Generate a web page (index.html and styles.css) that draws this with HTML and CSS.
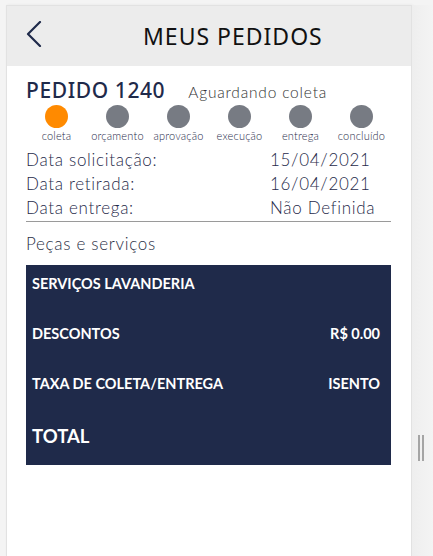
FILE: index.html
```html
<!DOCTYPE html>
<html lang="pt-BR">
<head>
<meta charset="utf-8">
<title>Meus Pedidos</title>
<link rel="stylesheet" href="styles.css">
</head>
<body>
<div class="page">
  <div class="panel">
    <header class="topbar">
      <button class="back" aria-label="Voltar">
        <svg width="16" height="26" viewBox="0 0 16 26"><path d="M14 1 L2 13 L14 25" fill="none" stroke="#1f2a4a" stroke-width="2.2" stroke-linecap="round" stroke-linejoin="round"/></svg>
      </button>
      <h1 class="title">MEUS PEDIDOS</h1>
    </header>
    <main class="content">
      <div class="order-head">
        <span class="order-id">PEDIDO 1240</span>
        <span class="order-status">Aguardando coleta</span>
      </div>
      <ol class="steps">
        <li class="step active"><span class="dot"></span><span class="label">coleta</span></li>
        <li class="step"><span class="dot"></span><span class="label">orçamento</span></li>
        <li class="step"><span class="dot"></span><span class="label">aprovação</span></li>
        <li class="step"><span class="dot"></span><span class="label">execução</span></li>
        <li class="step"><span class="dot"></span><span class="label">entrega</span></li>
        <li class="step"><span class="dot"></span><span class="label">concluído</span></li>
      </ol>
      <dl class="dates">
        <dt>Data solicitação:</dt><dd>15/04/2021</dd>
        <dt>Data retirada:</dt><dd>16/04/2021</dd>
        <dt>Data entrega:</dt><dd>Não Definida</dd>
      </dl>
      <h2 class="section">Peças e serviços</h2>
      <div class="summary">
        <div class="row"><span>SERVIÇOS LAVANDERIA</span></div>
        <div class="row"><span>DESCONTOS</span><span>R$ 0.00</span></div>
        <div class="row"><span>TAXA DE COLETA/ENTREGA</span><span>ISENTO</span></div>
        <div class="row total"><span>TOTAL</span></div>
      </div>
    </main>
  </div>
  <div class="side">
    <span class="grip"></span>
  </div>
</div>
</body>
</html>
```
FILE: styles.css
```css
html, body {
  margin: 0;
  padding: 0;
  height: 100%;
}
body {
  background: #f4f4f4;
  font-family: "Lato", "Open Sans", sans-serif;
  color: #1f2a4a;
  overflow: hidden;
}
.page {
  display: flex;
  height: 556px;
  padding: 5px 0 0 6px;
  box-sizing: border-box;
}
.panel {
  width: 406px;
  flex: none;
  background: #fff;
  border: 1px solid #e2e2e2;
  border-bottom: none;
  box-sizing: border-box;
  box-shadow: 1px 0 3px rgba(0,0,0,0.06);
}
.topbar {
  height: 60px;
  background: #ececec;
  display: flex;
  align-items: center;
  padding-left: 19px;
}
.back {
  border: 0;
  background: none;
  padding: 0;
  width: 16px;
  height: 26px;
  display: flex;
  margin-top: -4px;
}
.title {
  margin: 0 0 0 101px;
  font-family: "Noto Sans", sans-serif;
  font-weight: 400;
  font-size: 23px;
  letter-spacing: 1px;
  color: #111;
}
.content {
  padding: 10px 20px 0 19px;
}
.order-head {
  display: flex;
  align-items: baseline;
  height: 26px;
}
.order-id {
  font-family: "Noto Sans", sans-serif;
  font-size: 21px;
  font-weight: 500;
  color: #1f2a4a;
  letter-spacing: 0.6px;
}
.order-status {
  margin-left: 23px;
  font-family: "Lato", sans-serif;
  font-weight: 300;
  font-size: 15.5px;
  color: #333;
  letter-spacing: 0.8px;
}
.steps {
  list-style: none;
  margin: 3px 0 0;
  padding: 0;
  display: grid;
  grid-template-columns: repeat(6, 61px);
}
.step {
  display: flex;
  flex-direction: column;
  align-items: center;
}
.dot {
  width: 23px;
  height: 23px;
  border-radius: 50%;
  background: #777b83;
}
.step.active .dot {
  background: #ff8a00;
}
.label {
  margin-top: 1px;
  font-family: "Lato", sans-serif;
  font-weight: 300;
  font-size: 11px;
  color: #1f2a4a;
  letter-spacing: 0.2px;
  white-space: nowrap;
}
.dates {
  margin: 6px 0 0;
  display: grid;
  grid-template-columns: 244px 1fr;
  border-bottom: 1px solid #9a9a9a;
  padding-bottom: 1px;
}
.dates dt, .dates dd {
  margin: 0;
  font-family: "Lato", sans-serif;
  font-weight: 300;
  font-size: 17px;
  line-height: 24px;
  color: #1f2a4a;
  letter-spacing: 0.7px;
}
.section {
  margin: 11px 0 0;
  font-family: "Lato", sans-serif;
  font-weight: 300;
  font-size: 17px;
  line-height: 22px;
  color: #2a2f45;
  letter-spacing: 0.7px;
}
.summary {
  margin-top: 10px;
  background: #1f2a4a;
  color: #fff;
  padding: 9px 11px 0 6px;
  height: 200px;
  box-sizing: border-box;
}
.row {
  display: flex;
  justify-content: space-between;
  font-family: "Lato", sans-serif;
  font-weight: 700;
  font-size: 14.5px;
  line-height: 20px;
  height: 50px;
  letter-spacing: 0;
}
.row.total {
  font-size: 18.5px;
  line-height: 22px;
  margin-top: 1px;
}
.side {
  flex: 1;
  display: flex;
  justify-content: center;
  align-items: flex-start;
  background: linear-gradient(to right, #eeeeee, #f4f4f4);
}
.grip {
  margin-top: 430px;
  width: 2px;
  height: 26px;
  border-left: 2px solid #a5a5a5;
  border-right: 2px solid #a5a5a5;
  margin-left: -4px;
}
```
